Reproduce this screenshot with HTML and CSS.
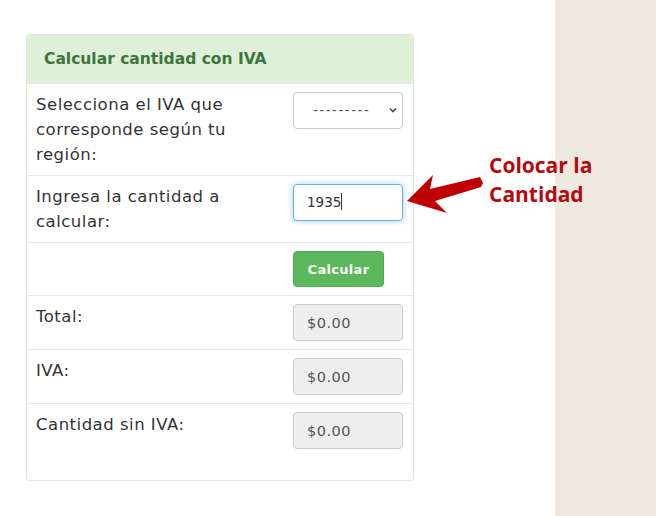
FILE: index.html
```html
<html>

<head>
    <link rel="stylesheet" href="styles.css">
    <title>Calcular IVA</title>
</head>

<body>
    <div class='page'>
        <div class='main'>
            <div class='panel'>
                <div class='panel-heading'>Calcular cantidad con IVA</div>
                <table class='calc'>
                    <tr>
                        <td class='label'>Selecciona el IVA que corresponde según tu región:</td>
                        <td class='field'>
                            <div class='select-wrap'>
                                <div class='control select'>---------</div>
                                <svg class='chevron' width='10' height='8' viewBox='0 0 10 8'>
                                    <path d='M2 2.5 L5 5.5 L8 2.5' fill='none' stroke='#444' stroke-width='1.6' />
                                </svg>
                            </div>
                        </td>
                    </tr>
                    <tr>
                        <td class='label'>Ingresa la cantidad a calcular:</td>
                        <td class='field'>
                            <div class='control focus'>1935<span class='caret'></span></div>
                        </td>
                    </tr>
                    <tr>
                        <td class='label'></td>
                        <td class='field'><button class='btn'>Calcular</button></td>
                    </tr>
                    <tr>
                        <td class='label'>Total:</td>
                        <td class='field'><div class='control readonly'>$0.00</div></td>
                    </tr>
                    <tr>
                        <td class='label'>IVA:</td>
                        <td class='field'><div class='control readonly'>$0.00</div></td>
                    </tr>
                    <tr>
                        <td class='label'>Cantidad sin IVA:</td>
                        <td class='field'><div class='control readonly'>$0.00</div></td>
                    </tr>
                </table>
            </div>

            <!-- annotation over the form -->
            <div class='note'>Colocar la<br>Cantidad</div>
            <svg class='arrow' width='90' height='50' viewBox='0 0 90 50'>
                <polygon points='7,31 33,5 30,19 80,7 83,13 81,17 35,31 47,43' fill='#c00000' />
            </svg>
        </div>
        <div class='side'></div>
    </div>
</body>

</html>
```
FILE: styles.css
```css
body {
    margin: 0;
    font-family: "DejaVu Sans", sans-serif;
    color: #333;
    background: #fff;
}

.page {
    display: flex;
    height: 516px;
}

.main {
    position: relative;
    width: 555px;
    padding: 34px 0 0 26px;
    box-sizing: border-box;
}

.side {
    flex: 1;
    background-color: #eeeae1;
}

.panel {
    width: 388px;
    box-sizing: border-box;
    border: 1px solid #dfe8d4;
    border-radius: 4px;
    padding-bottom: 23px;
}

.panel-heading {
    background-color: #dff0d8;
    color: #3c763d;
    font-weight: bold;
    font-size: 15.5px;
    height: 48px;
    line-height: 48px;
    padding-left: 17px;
    border-bottom: 1px solid #e3e8dd;
    border-radius: 3px 3px 0 0;
}

.calc {
    width: 100%;
    border-collapse: collapse;
    table-layout: fixed;
}

.calc tr+tr td {
    border-top: 1px solid #e6e6e6;
}

.calc td {
    vertical-align: top;
    padding: 8px;
}

.label {
    font-size: 16.5px;
    letter-spacing: 0.5px;
    line-height: 25px;
    padding-left: 9px !important;
    width: 241px;
}

.field {
    padding-left: 8px;
}

.control {
    width: 110px;
    height: 37px;
    box-sizing: border-box;
    border: 1px solid #ccc;
    border-radius: 4px;
    font-size: 13.5px;
    line-height: 35px;
    padding-left: 13px;
    background: #fff;
}

.select-wrap {
    position: relative;
    width: 110px;
}

.select {
    padding-left: 19px;
    color: #555;
    letter-spacing: 1.5px;
}

.chevron {
    position: absolute;
    right: 5px;
    top: 14px;
}

.focus {
    border-color: #66afe9;
    box-shadow: 0 0 6px rgba(102, 175, 233, .6);
    padding-left: 13px;
}

.caret {
    display: inline-block;
    width: 1px;
    height: 17px;
    background: #333;
    vertical-align: -3px;
}

.readonly {
    background-color: #eee;
    color: #555;
    font-size: 14.5px;
    letter-spacing: 0.5px;
    line-height: 37px;
}

.btn {
    display: block;
    background-color: #5cb85c;
    border: 1px solid #4cae4c;
    color: #fff;
    font-family: "DejaVu Sans", sans-serif;
    font-weight: bold;
    font-size: 13px;
    letter-spacing: 0.3px;
    height: 36px;
    width: 91px;
    border-radius: 4px;
}

.note {
    position: absolute;
    left: 489px;
    top: 151px;
    color: #b8090c;
    font-family: "Open Sans", sans-serif;
    font-weight: bold;
    font-size: 21px;
    line-height: 29px;
    white-space: nowrap;
}

.arrow {
    position: absolute;
    left: 400px;
    top: 170px;
}
```
